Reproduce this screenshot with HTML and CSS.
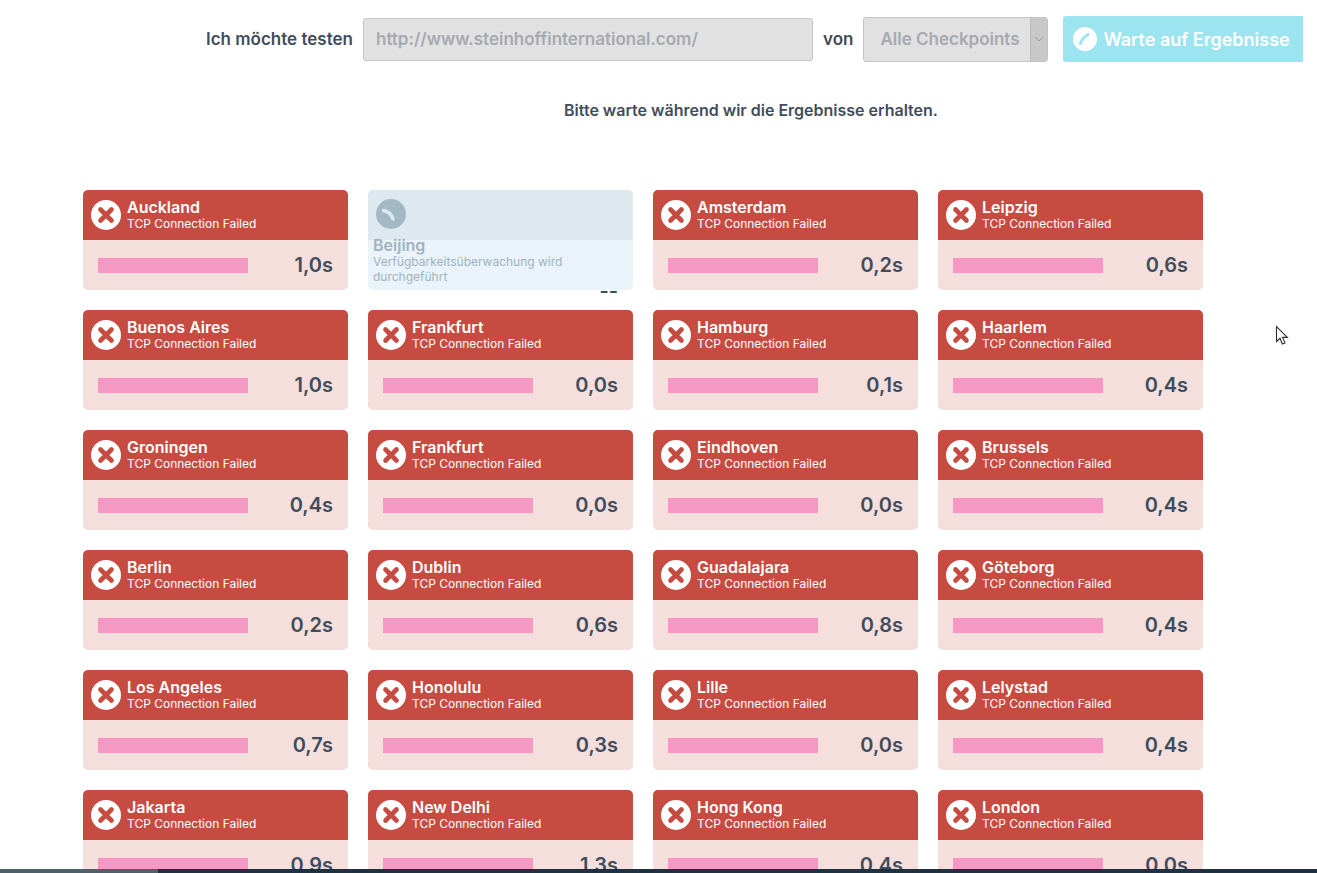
FILE: index.html
```html
<!DOCTYPE html>
<html lang="de">
<head>
    <meta charset="UTF-8">
    <title>Verfügbarkeit testen</title>
    <link rel="stylesheet" href="styles.css">
</head>
<body>
    <svg class="defs" width="0" height="0">
        <symbol id="fail" viewBox="0 0 30 30">
            <circle cx="15" cy="15" r="15" fill="#fff"/>
            <path d="M9.5 9.5l11 11M20.500 9.500l-11 11" stroke="#c64b41" stroke-width="4.600" stroke-linecap="round" fill="none"/>
        </symbol>
    </svg>

    <form class="test-form">
        <label class="test-label" for="url">Ich möchte testen</label>
        <input class="test-url" id="url" type="text" value="http://www.steinhoffinternational.com/" disabled>
        <span class="test-label test-von">von</span>
        <div class="test-select">
            <span class="test-select-text">Alle Checkpoints</span>
            <span class="test-select-arrow">
                <svg width="10" height="6" viewBox="0 0 10 6"><path d="M1 1l4 4 4-4" stroke="#9a9a9a" fill="none"/></svg>
            </span>
        </div>
        <button class="test-button" type="button" disabled>
            <svg width="30" height="30" viewBox="0 0 30 30">
                <circle cx="15" cy="15" r="12" fill="#fff"/>
                <path d="M10.500 19.500C11.500 16 14.500 12.500 18 10.500" stroke="#9be4f0" stroke-width="3" stroke-linecap="round" fill="none"/>
            </svg>
            Warte auf Ergebnisse
        </button>
    </form>

    <p class="wait-text">Bitte warte während wir die Ergebnisse erhalten.</p>

    <div class="results">
        <div class="card">
            <div class="card-head"><svg class="card-icon"><use href="#fail"/></svg><div class="card-text"><strong>Auckland</strong><small>TCP Connection Failed</small></div></div>
            <div class="card-body"><div class="bar"></div><span class="time">1,0s</span></div>
        </div>
        <div class="card pending">
            <div class="card-head">
                <svg class="card-icon" viewBox="0 0 30 30">
                    <circle cx="15" cy="15" r="15" fill="#a2b8c4"/>
                    <path d="M7.500 11.500C12 12.500 15.500 15 17 20" stroke="#dde9ef" stroke-width="3.500" stroke-linecap="round" fill="none"/>
                </svg>
                <div class="card-text"><strong>Beijing</strong><small>Verfügbarkeitsüberwachung wird durchgeführt</small></div>
            </div>
            <div class="card-body"><span class="time">--</span></div>
        </div>
        <div class="card">
            <div class="card-head"><svg class="card-icon"><use href="#fail"/></svg><div class="card-text"><strong>Amsterdam</strong><small>TCP Connection Failed</small></div></div>
            <div class="card-body"><div class="bar"></div><span class="time">0,2s</span></div>
        </div>
        <div class="card">
            <div class="card-head"><svg class="card-icon"><use href="#fail"/></svg><div class="card-text"><strong>Leipzig</strong><small>TCP Connection Failed</small></div></div>
            <div class="card-body"><div class="bar"></div><span class="time">0,6s</span></div>
        </div>

        <div class="card">
            <div class="card-head"><svg class="card-icon"><use href="#fail"/></svg><div class="card-text"><strong>Buenos Aires</strong><small>TCP Connection Failed</small></div></div>
            <div class="card-body"><div class="bar"></div><span class="time">1,0s</span></div>
        </div>
        <div class="card">
            <div class="card-head"><svg class="card-icon"><use href="#fail"/></svg><div class="card-text"><strong>Frankfurt</strong><small>TCP Connection Failed</small></div></div>
            <div class="card-body"><div class="bar"></div><span class="time">0,0s</span></div>
        </div>
        <div class="card">
            <div class="card-head"><svg class="card-icon"><use href="#fail"/></svg><div class="card-text"><strong>Hamburg</strong><small>TCP Connection Failed</small></div></div>
            <div class="card-body"><div class="bar"></div><span class="time">0,1s</span></div>
        </div>
        <div class="card">
            <div class="card-head"><svg class="card-icon"><use href="#fail"/></svg><div class="card-text"><strong>Haarlem</strong><small>TCP Connection Failed</small></div></div>
            <div class="card-body"><div class="bar"></div><span class="time">0,4s</span></div>
        </div>

        <div class="card">
            <div class="card-head"><svg class="card-icon"><use href="#fail"/></svg><div class="card-text"><strong>Groningen</strong><small>TCP Connection Failed</small></div></div>
            <div class="card-body"><div class="bar"></div><span class="time">0,4s</span></div>
        </div>
        <div class="card">
            <div class="card-head"><svg class="card-icon"><use href="#fail"/></svg><div class="card-text"><strong>Frankfurt</strong><small>TCP Connection Failed</small></div></div>
            <div class="card-body"><div class="bar"></div><span class="time">0,0s</span></div>
        </div>
        <div class="card">
            <div class="card-head"><svg class="card-icon"><use href="#fail"/></svg><div class="card-text"><strong>Eindhoven</strong><small>TCP Connection Failed</small></div></div>
            <div class="card-body"><div class="bar"></div><span class="time">0,0s</span></div>
        </div>
        <div class="card">
            <div class="card-head"><svg class="card-icon"><use href="#fail"/></svg><div class="card-text"><strong>Brussels</strong><small>TCP Connection Failed</small></div></div>
            <div class="card-body"><div class="bar"></div><span class="time">0,4s</span></div>
        </div>

        <div class="card">
            <div class="card-head"><svg class="card-icon"><use href="#fail"/></svg><div class="card-text"><strong>Berlin</strong><small>TCP Connection Failed</small></div></div>
            <div class="card-body"><div class="bar"></div><span class="time">0,2s</span></div>
        </div>
        <div class="card">
            <div class="card-head"><svg class="card-icon"><use href="#fail"/></svg><div class="card-text"><strong>Dublin</strong><small>TCP Connection Failed</small></div></div>
            <div class="card-body"><div class="bar"></div><span class="time">0,6s</span></div>
        </div>
        <div class="card">
            <div class="card-head"><svg class="card-icon"><use href="#fail"/></svg><div class="card-text"><strong>Guadalajara</strong><small>TCP Connection Failed</small></div></div>
            <div class="card-body"><div class="bar"></div><span class="time">0,8s</span></div>
        </div>
        <div class="card">
            <div class="card-head"><svg class="card-icon"><use href="#fail"/></svg><div class="card-text"><strong>Göteborg</strong><small>TCP Connection Failed</small></div></div>
            <div class="card-body"><div class="bar"></div><span class="time">0,4s</span></div>
        </div>

        <div class="card">
            <div class="card-head"><svg class="card-icon"><use href="#fail"/></svg><div class="card-text"><strong>Los Angeles</strong><small>TCP Connection Failed</small></div></div>
            <div class="card-body"><div class="bar"></div><span class="time">0,7s</span></div>
        </div>
        <div class="card">
            <div class="card-head"><svg class="card-icon"><use href="#fail"/></svg><div class="card-text"><strong>Honolulu</strong><small>TCP Connection Failed</small></div></div>
            <div class="card-body"><div class="bar"></div><span class="time">0,3s</span></div>
        </div>
        <div class="card">
            <div class="card-head"><svg class="card-icon"><use href="#fail"/></svg><div class="card-text"><strong>Lille</strong><small>TCP Connection Failed</small></div></div>
            <div class="card-body"><div class="bar"></div><span class="time">0,0s</span></div>
        </div>
        <div class="card">
            <div class="card-head"><svg class="card-icon"><use href="#fail"/></svg><div class="card-text"><strong>Lelystad</strong><small>TCP Connection Failed</small></div></div>
            <div class="card-body"><div class="bar"></div><span class="time">0,4s</span></div>
        </div>

        <div class="card">
            <div class="card-head"><svg class="card-icon"><use href="#fail"/></svg><div class="card-text"><strong>Jakarta</strong><small>TCP Connection Failed</small></div></div>
            <div class="card-body"><div class="bar"></div><span class="time">0,9s</span></div>
        </div>
        <div class="card">
            <div class="card-head"><svg class="card-icon"><use href="#fail"/></svg><div class="card-text"><strong>New Delhi</strong><small>TCP Connection Failed</small></div></div>
            <div class="card-body"><div class="bar"></div><span class="time">1,3s</span></div>
        </div>
        <div class="card">
            <div class="card-head"><svg class="card-icon"><use href="#fail"/></svg><div class="card-text"><strong>Hong Kong</strong><small>TCP Connection Failed</small></div></div>
            <div class="card-body"><div class="bar"></div><span class="time">0,4s</span></div>
        </div>
        <div class="card">
            <div class="card-head"><svg class="card-icon"><use href="#fail"/></svg><div class="card-text"><strong>London</strong><small>TCP Connection Failed</small></div></div>
            <div class="card-body"><div class="bar"></div><span class="time">0,0s</span></div>
        </div>
    </div>

    <svg class="mouse-cursor" width="14" height="21" viewBox="0 0 14 21">
        <path d="M1.500 1.500v15l3.500-3.200 2.300 5.700 2.700-1.100-2.400-5.500h4.800z" fill="#fff" stroke="#2b2f36" stroke-width="1.100"/>
    </svg>

    <div class="progress"><div class="progress-done"></div></div>
</body>
</html>
```

FILE: styles.css
```css
* {
    margin: 0;
    padding: 0;
    box-sizing: border-box;
    font-family: 'Inter', sans-serif;
}

html, body {
    height: 873px;
    overflow: hidden;
    background: #fff;
}

.defs {
    display: block;
    height: 0;
}

.test-form {
    display: flex;
    align-items: center;
    height: 46px;
    margin-top: 16px;
    padding-left: 206px;
}

.test-label {
    font-size: 17px;
    font-weight: 600;
    color: #3f4d5c;
    white-space: nowrap;
}

.test-url {
    width: 450px;
    height: 43px;
    margin-left: 10px;
    padding: 0 12px;
    background: #e1e1e1;
    border: 1px solid #c4c4c4;
    border-radius: 3px;
    font-size: 17px;
    font-weight: 600;
    color: #a5a9b0;
    -webkit-text-fill-color: #a5a9b0;
    opacity: 1;
}

.test-von {
    margin-left: 10px;
}

.test-select {
    display: flex;
    width: 185px;
    height: 45px;
    margin-left: 10px;
    background: #e1e1e1;
    border: 1px solid #c4c4c4;
    border-radius: 3px;
    overflow: hidden;
}

.test-select-text {
    flex: 1;
    padding-left: 16px;
    font-size: 17px;
    font-weight: 600;
    line-height: 43px;
    color: #a5a9b0;
    white-space: nowrap;
    overflow: hidden;
}

.test-select-arrow {
    display: flex;
    align-items: center;
    justify-content: center;
    width: 17px;
    background: #c8c8c8;
    border-left: 1px solid #bcbcbc;
}

.test-button {
    display: flex;
    align-items: center;
    gap: 3px;
    width: 240px;
    height: 46px;
    margin-left: 15px;
    padding-left: 7px;
    background: #9be4f0;
    border: none;
    border-radius: 3px 0 0 3px;
    font-size: 18px;
    font-weight: 600;
    color: #fff;
    white-space: nowrap;
}

.wait-text {
    margin-top: 38px;
    padding-left: 564px;
    font-size: 16px;
    font-weight: 600;
    line-height: 20px;
    color: #3f4d5c;
}

.results {
    display: grid;
    grid-template-columns: repeat(4, 265px);
    grid-auto-rows: 100px;
    gap: 20px;
    margin-top: 70px;
    padding-left: 83px;
}

.card {
    background: #f4dfdd;
    border-radius: 5px;
}

.card-head {
    display: flex;
    align-items: center;
    height: 50px;
    padding-left: 8px;
    background: #c64b41;
    border-radius: 5px 5px 0 0;
    color: #fff;
}

.card-icon {
    flex: none;
    width: 30px;
    height: 30px;
    margin-right: 6px;
}

.card-text strong {
    display: block;
    font-size: 16px;
    font-weight: 600;
    line-height: 17px;
}

.card-text small {
    display: block;
    font-size: 12px;
    line-height: 15px;
}

.card-body {
    display: flex;
    align-items: center;
    justify-content: space-between;
    height: 50px;
    padding: 0 15px;
}

.bar {
    width: 150px;
    height: 15px;
    background: #f598c4;
}

.time {
    font-size: 20px;
    font-weight: 600;
    color: #3f4d5c;
}

/* check still running, text drops out of the head */
.pending {
    background: #e9f3f9;
}

.pending .card-head {
    flex-wrap: wrap;
    align-items: flex-start;
    align-content: flex-start;
    padding: 9px 5px 0;
    background: #dde9ef;
    color: #9fb3c0;
}

.pending .card-icon {
    margin: 0 200px 0 3px;
}

.pending .card-text {
    width: 100%;
    margin-top: 8px;
}

.pending .card-text small {
    width: 220px;
}

.pending .card-body {
    justify-content: flex-end;
}

.pending .time {
    margin-top: 52px;
}

.mouse-cursor {
    position: absolute;
    left: 1275px;
    top: 325px;
}

.progress {
    position: fixed;
    left: 0;
    right: 0;
    bottom: 0;
    height: 4px;
    background: #1f3040;
}

.progress-done {
    width: 158px;
    height: 4px;
    background: #4f6068;
}
```
